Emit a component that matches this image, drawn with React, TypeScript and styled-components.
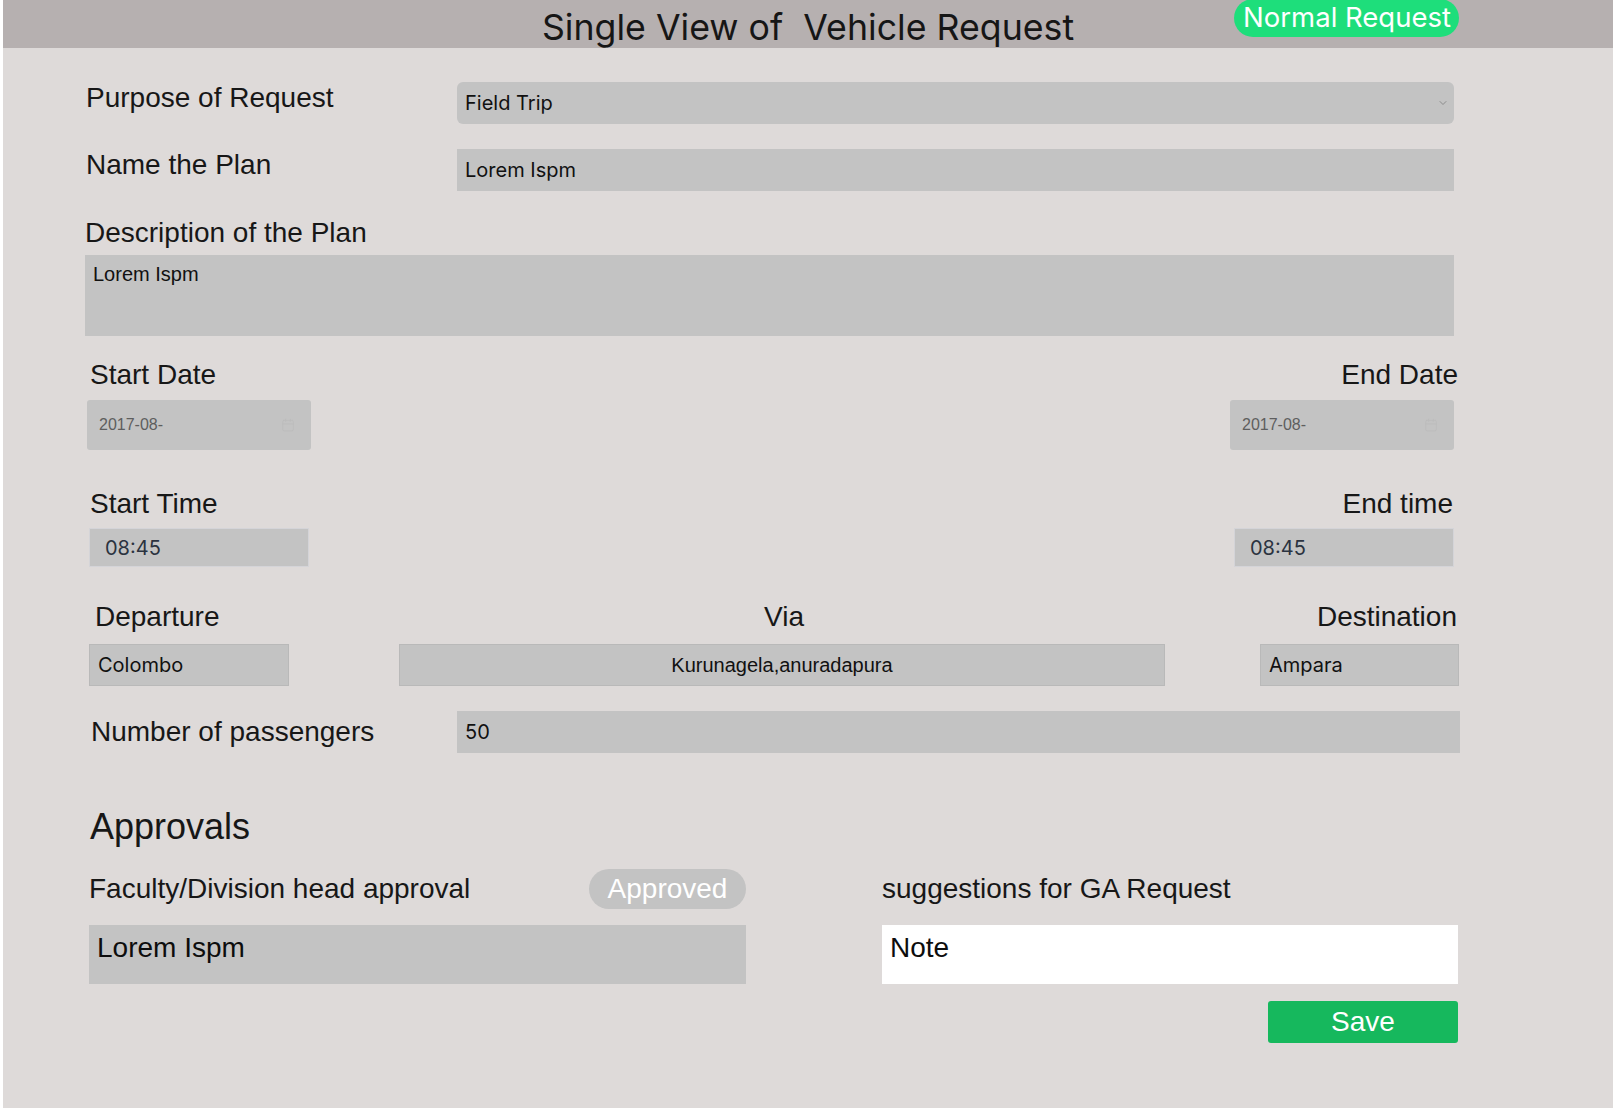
import styled, { createGlobalStyle } from 'styled-components';
import { ChevronDown, Calendar } from 'lucide-react';

const GlobalStyle = createGlobalStyle`
  body {
    margin: 0;
    background: #ffffff;
  }
  * {
    box-sizing: border-box;
  }
`;

type FieldProps = {
  $width: number;
};

type GroupProps = {
  $align?: 'flex-start' | 'center' | 'flex-end';
};

const App = () => {
  return (
    <>
      <GlobalStyle />
      <Page>
        <Header>
          <span />
          <Title>Single View of{'\u00a0'} Vehicle Request</Title>
          <RequestBadge>Normal Request</RequestBadge>
        </Header>

        <Form>
          <InlineRow>
            <Label>Purpose of Request</Label>
            <SelectWrap>
              <Select defaultValue="field">
                <option value="field">Field Trip</option>
              </Select>
              <ChevronDown size={12} color="#8c8c8c" strokeWidth={2} />
            </SelectWrap>
          </InlineRow>

          <InlineRow $top={25}>
            <Label>Name the Plan</Label>
            <TextInput defaultValue="Lorem Ispm" />
          </InlineRow>

          <Label $top={26}>Description of the Plan</Label>
          <Description defaultValue="Lorem Ispm" />

          <SplitRow $top={23}>
            <Group>
              <Label>Start Date</Label>
              <DateBox>
                <span>2017-08-</span>
                <Calendar size={14} color="#bcbcbc" strokeWidth={1.5} />
              </DateBox>
            </Group>
            <Group $align="flex-end">
              <WideLabel>End Date</WideLabel>
              <DateBox>
                <span>2017-08-</span>
                <Calendar size={14} color="#bcbcbc" strokeWidth={1.5} />
              </DateBox>
            </Group>
          </SplitRow>

          <SplitRow $top={38}>
            <Group>
              <Label>Start Time</Label>
              <TimeBox $width={220} $offset={2} defaultValue="08:45" />
            </Group>
            <Group $align="flex-end">
              <Label>End time</Label>
              <TimeBox $width={220} defaultValue="08:45" />
            </Group>
          </SplitRow>

          <RouteRow>
            <RouteColumn $width={200}>
              <RouteLabel>Departure</RouteLabel>
              <RouteInput defaultValue="Colombo" />
            </RouteColumn>
            <RouteColumn $width={766} $align="center">
              <RouteLabel>Via</RouteLabel>
              <ViaInput defaultValue="Kurunagela,anuradapura" />
            </RouteColumn>
            <RouteColumn $width={199} $align="flex-end">
              <RouteLabel>Destination</RouteLabel>
              <RouteInput defaultValue="Ampara" />
            </RouteColumn>
          </RouteRow>

          <PassengerRow>
            <Label>Number of passengers</Label>
            <TextInput defaultValue="50" />
          </PassengerRow>

          <SectionTitle>Approvals</SectionTitle>

          <ApprovalGrid>
            <ApprovalColumn>
              <ApprovalHead>
                <Label>Faculty/Division head approval</Label>
                <StatusPill>Approved</StatusPill>
              </ApprovalHead>
              <NoteBox $tone="grey" defaultValue="Lorem Ispm" />
            </ApprovalColumn>
            <ApprovalColumn>
              <ApprovalHead>
                <Label>suggestions for GA Request</Label>
              </ApprovalHead>
              <NoteBox $tone="white" defaultValue="Note" />
              <SaveButton>Save</SaveButton>
            </ApprovalColumn>
          </ApprovalGrid>
        </Form>
      </Page>
    </>
  );
};

const Page = styled.div`
  margin: 0 4px 0 3px;
  min-height: 1108px;
  background: #dedad9;
  font-family: 'Liberation Sans', Arial, sans-serif;
  color: #171717;
`;

const Header = styled.header`
  display: grid;
  grid-template-columns: 1fr auto 1fr;
  height: 48px;
  background: #b6b0b0;
`;

const Title = styled.h1`
  margin: 0;
  padding-top: 6px;
  font-family: Inter, 'Noto Sans', sans-serif;
  font-weight: 400;
  font-size: 35.7px;
  line-height: 1.19;
  color: #161616;
  white-space: nowrap;
`;

const RequestBadge = styled.span`
  justify-self: end;
  align-self: start;
  display: inline-flex;
  align-items: center;
  height: 38px;
  margin: -1px 154px 0 0;
  padding: 0 8px 0 9px;
  border-radius: 19px;
  background: #1ede7b;
  color: #ffffff;
  font-family: Inter, 'Noto Sans', sans-serif;
  font-size: 27.5px;
  line-height: 1;
  white-space: nowrap;
`;

const Form = styled.main`
  display: flex;
  flex-direction: column;
  width: 1461px;
  padding: 34px 0 0 82px;
`;

const Label = styled.label<{ $top?: number }>`
  display: block;
  margin-top: ${({ $top }) => $top ?? 0}px;
  font-size: 28px;
  line-height: 32px;
  color: #171717;
  white-space: nowrap;
`;

const WideLabel = styled(Label)`
  margin-right: -5px;
`;

const InlineRow = styled.div<{ $top?: number }>`
  display: grid;
  grid-template-columns: 372px 997px;
  align-items: start;
  margin-top: ${({ $top }) => $top ?? 0}px;

  > label {
    padding-left: 1px;
  }
`;

const fieldBase = `
  border: none;
  outline: none;
  background: #c3c3c3;
  font-family: Inter, 'Noto Sans', sans-serif;
  font-size: 20px;
  color: #111111;
`;

const SelectWrap = styled.div`
  position: relative;
  height: 42px;

  svg {
    position: absolute;
    right: 5px;
    top: 15px;
    pointer-events: none;
  }
`;

const Select = styled.select`
  ${fieldBase}
  appearance: none;
  width: 100%;
  height: 42px;
  padding: 0 0 0 8px;
  border-radius: 6px;
`;

const TextInput = styled.input`
  ${fieldBase}
  width: 100%;
  height: 42px;
  padding: 0 8px;
`;

const Description = styled.textarea`
  ${fieldBase}
  display: block;
  width: 1369px;
  height: 81px;
  margin-top: 6px;
  padding: 8px 8px;
  resize: none;
  font-family: 'Liberation Sans', Arial, sans-serif;
  line-height: 23px;
`;

const SplitRow = styled.div<{ $top: number }>`
  display: flex;
  justify-content: space-between;
  width: 1369px;
  margin-top: ${({ $top }) => $top}px;
  padding-left: 2px;
`;

const Group = styled.div<GroupProps>`
  display: flex;
  flex-direction: column;
  align-items: ${({ $align }) => $align ?? 'flex-start'};
  gap: 8px;

  > label {
    padding: 0 1px 0 3px;
  }
`;

const DateBox = styled.div`
  display: flex;
  align-items: center;
  justify-content: space-between;
  width: 224px;
  height: 50px;
  margin-top: 1px;
  padding: 0 16px 0 12px;
  border-radius: 3px;
  background: #c3c3c3;
  font-size: 16px;
  color: #5e5e5e;
`;

const TimeBox = styled.input<FieldProps & { $offset?: number }>`
  ${fieldBase}
  width: ${({ $width }) => $width}px;
  height: 39px;
  margin-left: ${({ $offset }) => $offset ?? 0}px;
  padding: 0 15px;
  border: 1px solid #d4d4d8;
  color: #2b3340;
`;

const RouteRow = styled.div`
  display: flex;
  margin-top: 34px;
  padding-left: 4px;

  > div:nth-child(2) {
    margin-left: 110px;
  }
  > div:nth-child(3) {
    margin-left: 95px;
  }
`;

const RouteColumn = styled.div<FieldProps & GroupProps>`
  display: flex;
  flex-direction: column;
  align-items: ${({ $align }) => $align ?? 'flex-start'};
  width: ${({ $width }) => $width}px;
  gap: 11px;
`;

const RouteLabel = styled(Label)`
  padding: 0 2px 0 6px;
`;

const RouteInput = styled.input`
  ${fieldBase}
  width: 100%;
  height: 42px;
  padding: 0 8px;
  border: 1px solid #b9b9b9;
`;

const ViaInput = styled(RouteInput)`
  text-align: center;
  font-family: 'Liberation Sans', Arial, sans-serif;
`;

const PassengerRow = styled.div`
  display: grid;
  grid-template-columns: 372px 1003px;
  align-items: center;
  margin-top: 25px;

  > label {
    padding-left: 6px;
  }
`;

const SectionTitle = styled.h2`
  margin: 53px 0 0 5px;
  font-weight: 400;
  font-size: 36px;
  line-height: 41px;
  color: #171717;
`;

const ApprovalGrid = styled.div`
  display: grid;
  grid-template-columns: 657px 576px;
  column-gap: 136px;
  margin-top: 22px;
  padding-left: 4px;
`;

const ApprovalColumn = styled.div`
  display: flex;
  flex-direction: column;
`;

const ApprovalHead = styled.div`
  display: flex;
  align-items: center;
  justify-content: space-between;
  height: 40px;
`;

const StatusPill = styled.span`
  display: inline-flex;
  align-items: center;
  justify-content: center;
  width: 157px;
  height: 40px;
  border-radius: 20px;
  background: #c3c3c3;
  color: #ffffff;
  font-size: 28px;
`;

const NoteBox = styled.textarea<{ $tone: 'grey' | 'white' }>`
  display: block;
  width: 100%;
  height: 59px;
  margin-top: 16px;
  padding: 7px 8px;
  border: none;
  outline: none;
  resize: none;
  background: ${({ $tone }) => ($tone === 'white' ? '#ffffff' : '#c3c3c3')};
  font-family: 'Liberation Sans', Arial, sans-serif;
  font-size: 28px;
  line-height: 32px;
  color: #0d0d0d;
  overflow: hidden;
`;

const SaveButton = styled.button`
  align-self: flex-end;
  width: 190px;
  height: 42px;
  margin-top: 17px;
  border: none;
  border-radius: 3px;
  background: #16b85d;
  color: #ffffff;
  font-family: 'Liberation Sans', Arial, sans-serif;
  font-size: 28px;
  cursor: pointer;
`;

export default App;
